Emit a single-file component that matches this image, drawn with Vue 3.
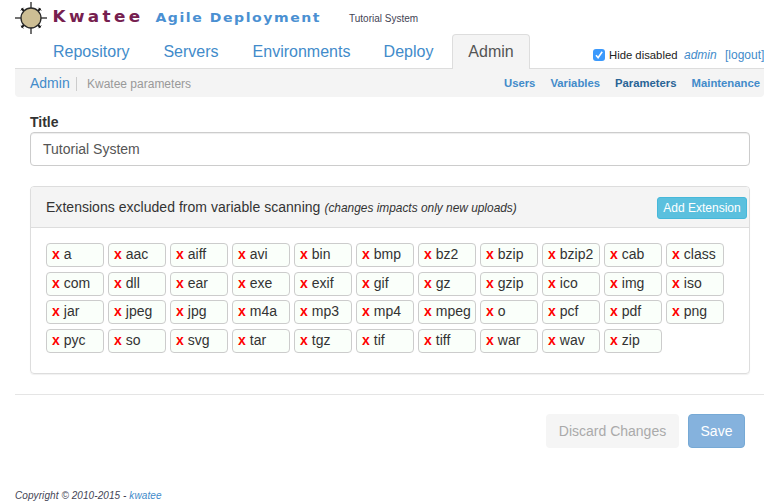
<script setup>
const tabs = ['Repository', 'Servers', 'Environments', 'Deploy', 'Admin']
const sections = ['Users', 'Variables', 'Parameters', 'Maintenance']
const extensions = [
  'a', 'aac', 'aiff', 'avi', 'bin', 'bmp', 'bz2', 'bzip', 'bzip2', 'cab', 'class',
  'com', 'dll', 'ear', 'exe', 'exif', 'gif', 'gz', 'gzip', 'ico', 'img', 'iso',
  'jar', 'jpeg', 'jpg', 'm4a', 'mp3', 'mp4', 'mpeg', 'o', 'pcf', 'pdf', 'png',
  'pyc', 'so', 'svg', 'tar', 'tgz', 'tif', 'tiff', 'war', 'wav', 'zip'
]
</script>

<template>
  <div class="page">
    <header class="brand">
      <svg class="logo" width="32" height="34" viewBox="0 0 32 34">
        <g stroke="#444">
          <path d="M16 2V34M0 18H32" stroke-width="1.500" />
          <path d="M6.500 8.500L25.500 27.500M25.500 8.500L6.500 27.500" stroke="#111" stroke-width="1.800" />
          <path d="M5.800 10.500L8.500 7.800M26.200 10.500L23.500 7.800M5.800 25.500L8.500 28.200M26.200 25.500L23.500 28.200" stroke="#222" stroke-width="1" />
        </g>
        <circle cx="16" cy="18" r="10" fill="#cdbe94" stroke="#292929" stroke-width="1.300" />
      </svg>
      <span class="name">Kwatee</span>
      <span class="tagline">Agile Deployment</span>
      <span class="system">Tutorial System</span>
    </header>

    <nav class="tabs">
      <a v-for="t in tabs" :key="t" class="tab" :class="[t.toLowerCase(), { active: t === 'Admin' }]">{{ t }}</a>
      <div class="session">
        <span class="check">
          <svg width="12" height="12" viewBox="0 0 12 12"><path d="M3 6.300L5.100 8.700L9.200 2.800" fill="none" stroke="#fff" stroke-width="1.600" /></svg>
        </span>
        <span class="hide">Hide disabled</span>
        <a class="user">admin</a>
        <a class="logout">[logout]</a>
      </div>
    </nav>

    <div class="crumbs">
      <a class="root">Admin</a>
      <span class="here">Kwatee parameters</span>
      <div class="sections">
        <a v-for="s in sections" :key="s" :class="{ current: s === 'Parameters' }">{{ s }}</a>
      </div>
    </div>

    <main class="content">
      <label class="label">Title</label>
      <div class="field">Tutorial System</div>
      <section class="panel">
        <div class="heading">
          <span class="caption">Extensions excluded from variable scanning</span>
          <em>(changes impacts only new uploads)</em>
          <button class="add">Add Extension</button>
        </div>
        <div class="chips">
          <span v-for="e in extensions" :key="e" class="chip"><b>x</b>{{ e }}</span>
        </div>
      </section>
    </main>

    <div class="actions">
      <button class="discard">Discard Changes</button>
      <button class="save">Save</button>
    </div>

    <footer class="foot">Copyright © 2010-2015 - <a>kwatee</a></footer>
  </div>
</template>

<style>
body {
  background: #fff;
  overflow: hidden;
}
</style>

<style scoped>
* {
  box-sizing: border-box;
}
.page {
  width: 764px;
  height: 501px;
  padding-left: 15px;
  overflow: hidden;
  font: 14px/20px "Liberation Sans", Arial, sans-serif;
  color: #333;
  white-space: nowrap;
}
a {
  color: #428bca;
}
button {
  font-family: inherit;
  padding: 0;
}
.brand {
  display: flex;
  height: 34px;
}
.logo {
  flex: none;
}
.name,
.tagline {
  flex: none;
  font-family: "DejaVu Sans", sans-serif;
  font-weight: bold;
  line-height: 20px;
  transform-origin: 0 0;
}
.name {
  width: 103px;
  padding: 7px 0 0 5px;
  font-size: 15px;
  letter-spacing: 3px;
  color: #76204f;
  transform: scaleX(1.12);
}
.tagline {
  width: 193px;
  padding: 8px 0 0 5px;
  font-size: 13px;
  letter-spacing: 1.450px;
  color: #4a90d2;
  transform: scaleX(1.080);
}
.system {
  padding: 9px 0 0 6px;
  font-size: 10px;
  color: #445;
}
.tabs {
  display: flex;
  height: 35px;
  border-bottom: 1px solid #ddd;
}
.tab {
  flex: none;
  height: 35px;
  padding-top: 8px;
  font-size: 16px;
  text-align: center;
}
.repository {
  width: 134px;
  padding-left: 38px;
  text-align: left;
}
.servers {
  width: 84px;
}
.environments {
  width: 137px;
}
.deploy {
  width: 77px;
}
.admin.active {
  width: 78px;
  margin-left: 5px;
  padding-top: 7px;
  background: #f4f4f4;
  border: 1px solid #ddd;
  border-bottom: 0;
  border-radius: 4px 4px 0 0;
  color: #555;
}
.session {
  display: flex;
  align-items: center;
  margin-left: 63px;
  padding-top: 8px;
  font-size: 12px;
}
.check {
  display: flex;
  flex: none;
  width: 12px;
  height: 12px;
  margin-right: 4px;
  border-radius: 3px;
  background: #3b99fc;
}
.hide {
  flex: none;
  width: 75px;
  font-size: 11.300px;
  color: #222;
}
.user {
  flex: none;
  width: 41px;
  font-style: italic;
}
.crumbs {
  display: flex;
  height: 28px;
  padding: 4px 4px 0 15px;
  background: #f4f4f4;
  border-radius: 0 0 4px 4px;
}
.root {
  width: 47px;
  height: 20px;
  position: relative;
}
.root::after {
  content: "";
  position: absolute;
  right: 0;
  top: 4px;
  width: 1px;
  height: 14px;
  background: #ccc;
}
.here {
  padding: 1px 0 0 10px;
  font-size: 12px;
  color: #999;
}
.sections {
  display: flex;
  gap: 15px;
  margin-left: auto;
  font-size: 11.300px;
  font-weight: bold;
}
.current {
  color: #2a6496;
}
.content {
  width: 750px;
  padding: 15px 15px 0;
}
.label {
  display: block;
  font-weight: bold;
}
.field {
  width: 720px;
  height: 34px;
  padding: 6px 12px;
  border: 1px solid #ccc;
  border-radius: 4px;
  box-shadow: inset 0 1px 1px rgba(0, 0, 0, .075);
  color: #555;
}
.panel {
  width: 720px;
  height: 188px;
  margin-top: 20px;
  border: 1px solid #ddd;
  border-radius: 4px;
  box-shadow: 0 1px 1px rgba(0, 0, 0, .06);
}
.heading {
  display: flex;
  height: 41px;
  padding: 10px 2px 0 15px;
  background: #f4f4f4;
  border-bottom: 1px solid #ddd;
  border-radius: 3px 3px 0 0;
}
.caption {
  letter-spacing: 0.030px;
}
.heading em {
  padding-top: 1px;
  margin-left: 4px;
  font-size: 11.900px;
}
.add {
  width: 90px;
  height: 22px;
  margin-left: auto;
  border: 1px solid #46b8da;
  border-radius: 3px;
  background: #5bc0de;
  color: #fff;
  font-size: 12px;
}
.chips {
  display: grid;
  grid-template-columns: repeat(11, 58px);
  grid-auto-rows: 24px;
  gap: 4.700px 4px;
  padding: 15px;
}
.chip {
  padding-left: 5px;
  line-height: 21px;
  border: 1px solid #ccc;
  border-radius: 4px;
  background: #fafffa;
}
.chip b {
  margin-right: 4px;
  color: #f00;
}
.actions {
  display: flex;
  justify-content: flex-end;
  gap: 9px;
  height: 81px;
  margin-top: 20px;
  padding: 19px 19px 0 0;
  border-top: 1px solid #e5e5e5;
}
.discard,
.save {
  height: 34px;
  border-radius: 4px;
  font-size: 14px;
}
.discard {
  width: 133px;
  border: 0;
  background: #f5f5f5;
  color: #aaa;
}
.save {
  width: 57px;
  border: 1px solid #76a9d5;
  background: #85b2dd;
  color: #fff;
}
.foot {
  margin-top: 11px;
  font-size: 10px;
  letter-spacing: 0.080px;
  font-style: italic;
  color: #445;
}
</style>
